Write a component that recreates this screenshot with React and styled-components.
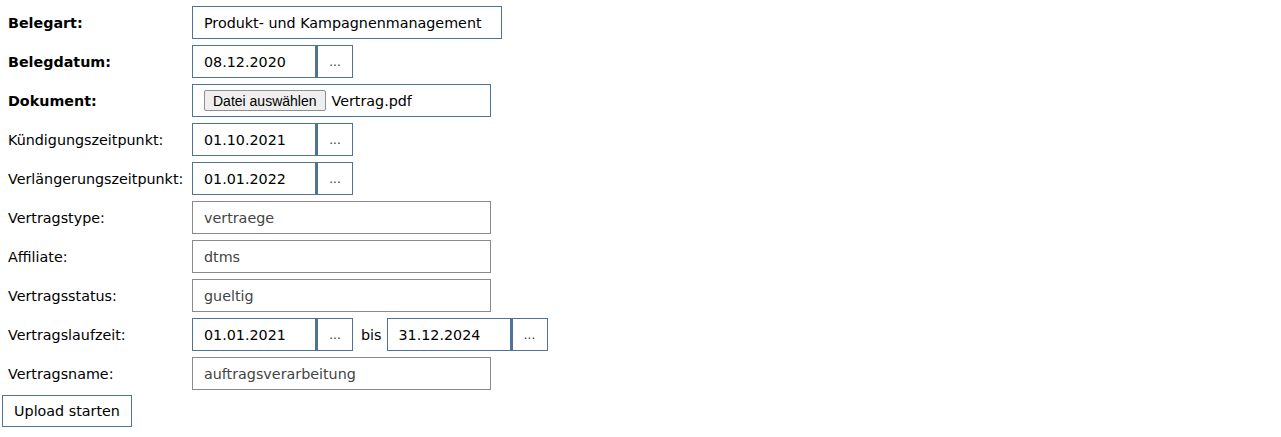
import React from "react";
import styled, { createGlobalStyle } from "styled-components";

const Global = createGlobalStyle`
  body {
    margin: 0;
    background: #fff;
    font-family: "DejaVu Sans", Verdana, sans-serif;
    font-size: 14.3px;
    color: #000;
  }
`;

const Form = styled.div`
  display: flex;
  flex-direction: column;
  gap: 6px;
  padding: 6px 0 0 0;
`;

const Row = styled.div`
  display: flex;
  align-items: center;
  height: 33px;
`;

const Label = styled.div`
  width: 184px;
  padding-left: 8px;
  font-weight: ${(p) => (p.bold ? "bold" : "normal")};
  white-space: nowrap;
`;

const Field = styled.div`
  box-sizing: border-box;
  height: 33px;
  width: ${(p) => p.w}px;
  border: 1px solid ${(p) => (p.readOnly ? "#8a8a8a" : "#4f7396")};
  padding-left: 11px;
  display: flex;
  align-items: center;
  color: ${(p) => (p.readOnly ? "#444" : "#000")};
  white-space: nowrap;
`;

const DotsButton = styled.div`
  box-sizing: border-box;
  height: 33px;
  width: 37px;
  border: 1px solid #4f7396;
  border-left-width: 2px;
  display: flex;
  align-items: center;
  justify-content: center;
  color: #333;
  font-size: 12px;
  -webkit-font-smoothing: antialiased;
`;

const Bis = styled.span`
  padding: 0 5px 0 8px;
`;

const FileButton = styled.div`
  box-sizing: border-box;
  height: 21px;
  padding: 0 8px;
  margin-right: 6px;
  background: #efefef;
  border: 1px solid #8f8f8f;
  border-radius: 2px;
  font-family: "Liberation Sans", Arial, sans-serif;
  font-size: 14px;
  display: flex;
  align-items: center;
`;

const Submit = styled.div`
  box-sizing: border-box;
  margin: -1px 0 0 2px;
  width: 130px;
  height: 32px;
  border: 1px solid #4f7396;
  display: flex;
  align-items: center;
  justify-content: center;
`;

const DateField = ({ value }) => (
  <>
    <Field w={124}>{value}</Field>
    <DotsButton>...</DotsButton>
  </>
);

export default function App() {
  return (
    <>
      <Global />
      <Form>
        <Row>
          <Label bold>Belegart:</Label>
          <Field w={310}>Produkt- und Kampagnenmanagement</Field>
        </Row>
        <Row>
          <Label bold>Belegdatum:</Label>
          <DateField value="08.12.2020" />
        </Row>
        <Row>
          <Label bold>Dokument:</Label>
          <Field w={299}>
            <FileButton>Datei auswählen</FileButton>
            Vertrag.pdf
          </Field>
        </Row>
        <Row>
          <Label>Kündigungszeitpunkt:</Label>
          <DateField value="01.10.2021" />
        </Row>
        <Row>
          <Label>Verlängerungszeitpunkt:</Label>
          <DateField value="01.01.2022" />
        </Row>
        <Row>
          <Label>Vertragstype:</Label>
          <Field w={299} readOnly>vertraege</Field>
        </Row>
        <Row>
          <Label>Affiliate:</Label>
          <Field w={299} readOnly>dtms</Field>
        </Row>
        <Row>
          <Label>Vertragsstatus:</Label>
          <Field w={299} readOnly>gueltig</Field>
        </Row>
        <Row>
          <Label>Vertragslaufzeit:</Label>
          <DateField value="01.01.2021" />
          <Bis>bis</Bis>
          <DateField value="31.12.2024" />
        </Row>
        <Row>
          <Label>Vertragsname:</Label>
          <Field w={299} readOnly>auftragsverarbeitung</Field>
        </Row>
        <Submit>Upload starten</Submit>
      </Form>
    </>
  );
}
